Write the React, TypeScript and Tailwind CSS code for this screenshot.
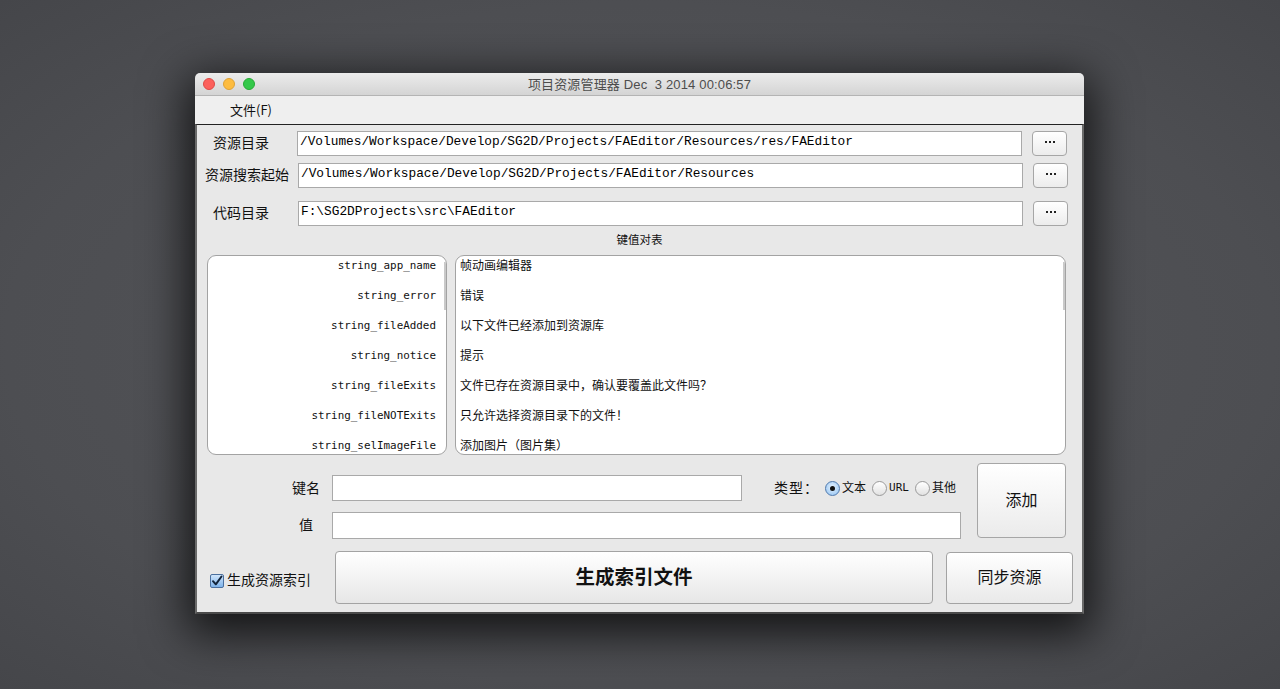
import React from 'react'

const CJK = "font-['Liberation_Sans','Noto_Sans_CJK_SC',sans-serif]"
const MONO = "font-['Liberation_Mono','Noto_Sans_CJK_SC',monospace]"
const LIST_MONO = "font-['DejaVu_Sans_Mono','Noto_Sans_CJK_SC',monospace]"

const pairs = [
  ['string_app_name', '帧动画编辑器'],
  ['string_error', '错误'],
  ['string_fileAdded', '以下文件已经添加到资源库'],
  ['string_notice', '提示'],
  ['string_fileExits', '文件已存在资源目录中，确认要覆盖此文件吗？'],
  ['string_fileNOTExits', '只允许选择资源目录下的文件！'],
  ['string_selImageFile', '添加图片（图片集）'],
]

function PathRow({ label, value, labelPad, labelW, top }: { label: string; value: string; labelPad: string; labelW: string; top: string }) {
  return (
    <div className={`flex items-center ${top}`}>
      <div className={`${labelW} ${labelPad} shrink-0 text-[14px] text-[#111]`}>{label}</div>
      <div className={`w-[725px] h-[25px] bg-white border border-[#a9a9a9] pl-[2px] pt-[1px] ${MONO} text-[12.8px] leading-[18px] text-black`}>
        {value}
      </div>
      <button className="ml-[10px] w-[35px] h-[25px] rounded-[4px] border border-[#a6a6a6] bg-linear-to-b from-white to-[#ececec] flex items-center justify-center gap-[2px] pb-[3px]">
        <span className="w-[2px] h-[2px] bg-[#222]" />
        <span className="w-[2px] h-[2px] bg-[#222]" />
        <span className="w-[2px] h-[2px] bg-[#222]" />
      </button>
    </div>
  )
}

function Radio({ on, label, mono }: { on?: boolean; label: string; mono?: boolean }) {
  return (
    <div className="flex items-center gap-[2px]">
      <span
        className={
          on
            ? 'w-[15px] h-[15px] rounded-full border border-[#4f79ad] bg-[radial-gradient(circle_at_50%_40%,#e6f2fd_0%,#8fc1f2_100%)] flex items-center justify-center'
            : 'w-[15px] h-[15px] rounded-full border border-[#9a9a9a] bg-linear-to-b from-white to-[#e2e2e2]'
        }
      >
        {on && <span className="w-[5px] h-[5px] rounded-full bg-[#111]" />}
      </span>
      <span className={mono ? `${LIST_MONO} text-[11px] text-[#111]` : 'text-[12px] text-[#111]'}>{label}</span>
    </div>
  )
}

export default function App() {
  return (
    <div className={`w-[1280px] h-[689px] overflow-hidden bg-[radial-gradient(ellipse_at_center,#55565a_0%,#4d4e52_70%,#45464a_100%)] pt-[73px] pl-[195px] ${CJK}`}>
      <div className="w-[889px] rounded-t-[5px] shadow-[0_12px_45px_8px_rgba(0,0,0,0.75)]">
        {/* Title bar */}
        <div className="relative h-[23px] rounded-t-[5px] bg-linear-to-b from-[#ececec] to-[#d4d4d4] border-b border-[#b4b4b4] flex items-center pl-[8px] gap-[8px]">
          <span className="w-[12px] h-[12px] rounded-full bg-[#fc605c] border border-[#de4a46]" />
          <span className="w-[12px] h-[12px] rounded-full bg-[#fdbc40] border border-[#dea236]" />
          <span className="w-[12px] h-[12px] rounded-full bg-[#34c84a] border border-[#27aa35]" />
          <div className="absolute inset-0 pt-[2px] flex items-center justify-center text-[13px] tracking-[0.15px] text-[#4d4d4d] pointer-events-none">
            项目资源管理器 Dec&nbsp;&nbsp;3 2014 00:06:57
          </div>
        </div>

        {/* Menu bar */}
        <div className="h-[28px] bg-[#efefef] flex items-center pl-[35px] text-[13px] text-[#111] font-['Noto_Sans_CJK_SC',sans-serif]">文件(F)</div>

        {/* Content */}
        <div className="bg-[#e8e8e8] border-t border-[#222] border-x-2 border-b-2 border-x-[#6a6a6a] border-b-[#4a4a4a] pb-[8px]">
          <PathRow top="pt-[6px]" labelW="w-[100px]" labelPad="pl-[16px]" label="资源目录" value="/Volumes/Workspace/Develop/SG2D/Projects/FAEditor/Resources/res/FAEditor" />
          <PathRow top="mt-[7px]" labelW="w-[101px]" labelPad="pl-[8px]" label="资源搜索起始" value="/Volumes/Workspace/Develop/SG2D/Projects/FAEditor/Resources" />
          <PathRow top="mt-[13px]" labelW="w-[101px]" labelPad="pl-[16px]" label="代码目录" value="F:\SG2DProjects\src\FAEditor" />

          <div className="h-[29px] flex items-center justify-center text-[11.5px] text-[#111]">键值对表</div>

          {/* Key/value lists */}
          <div className="flex gap-[8px] pl-[10px]">
            <div className="relative w-[240px] h-[200px] bg-white border border-[#a3a3a3] rounded-[9px] overflow-hidden">
              <div className="flex flex-col gap-[10px] pr-[10px]">
                {pairs.map(([k]) => (
                  <div key={k} className={`h-[20px] leading-[20px] text-right ${LIST_MONO} text-[10.9px] text-[#111]`}>{k}</div>
                ))}
              </div>
              <span className="absolute right-0 top-[6px] w-[2px] h-[48px] bg-[#c9c9c9]" />
            </div>
            <div className="relative w-[611px] h-[200px] bg-white border border-[#a3a3a3] rounded-[9px] overflow-hidden">
              <div className="flex flex-col gap-[10px] pl-[4px]">
                {pairs.map(([k, v]) => (
                  <div key={k} className="h-[20px] leading-[20px] text-[12px] text-[#111]">{v}</div>
                ))}
              </div>
              <span className="absolute right-0 top-[6px] w-[2px] h-[48px] bg-[#c9c9c9]" />
            </div>
          </div>

          {/* Add entry */}
          <div className="flex mt-[8px]">
            <div className="w-[780px] pt-[12px]">
              <div className="flex items-center">
                <div className="ml-[95px] w-[28px] text-center text-[14px] text-[#111]">键名</div>
                <div className="ml-[12px] w-[410px] h-[26px] bg-white border border-[#a9a9a9]" />
                <div className="ml-[32px] flex items-center">
                  <span className="text-[14px] text-[#111] tracking-[1px]">类型：</span>
                  <div className="ml-[6px] flex items-center gap-[6px]">
                    <Radio on label="文本" />
                    <Radio mono label="URL" />
                    <Radio label="其他" />
                  </div>
                </div>
              </div>
              <div className="flex items-center mt-[11px]">
                <div className="ml-[95px] w-[28px] text-center text-[14px] text-[#111]">值</div>
                <div className="ml-[12px] w-[629px] h-[27px] bg-white border border-[#a9a9a9]" />
              </div>
            </div>
            <button className="w-[89px] h-[75px] rounded-[4px] border border-[#a6a6a6] bg-linear-to-b from-white to-[#ebebeb] text-[16px] text-[#111]">
              添加
            </button>
          </div>

          {/* Bottom actions */}
          <div className="flex items-center mt-[12px]">
            <div className="w-[138px] pl-[13px] flex items-center gap-[3px] pt-[6px]">
              <span className="w-[14px] h-[14px] rounded-[2px] border border-[#4a6f9e] bg-linear-to-b from-[#cfe5fb] to-[#7fb3ea] flex items-center justify-center">
                <svg width="12" height="12" viewBox="0 0 12 12">
                  <path d="M2 6.2 L4.8 9.3 L10.5 1.5" fill="none" stroke="#12243a" strokeWidth="2" strokeLinecap="round" strokeLinejoin="round" />
                </svg>
              </span>
              <span className="text-[14px] text-[#111]">生成资源索引</span>
            </div>
            <button className="w-[598px] h-[53px] rounded-[4px] border border-[#a3a3a3] bg-linear-to-b from-white via-[#f3f3f3] to-[#e6e6e6] text-[19.5px] font-bold text-[#111]">
              生成索引文件
            </button>
            <button className="ml-[13px] w-[127px] h-[52px] rounded-[4px] border border-[#a3a3a3] bg-linear-to-b from-white to-[#e9e9e9] text-[16px] text-[#111]">
              同步资源
            </button>
          </div>
        </div>
      </div>
    </div>
  )
}
